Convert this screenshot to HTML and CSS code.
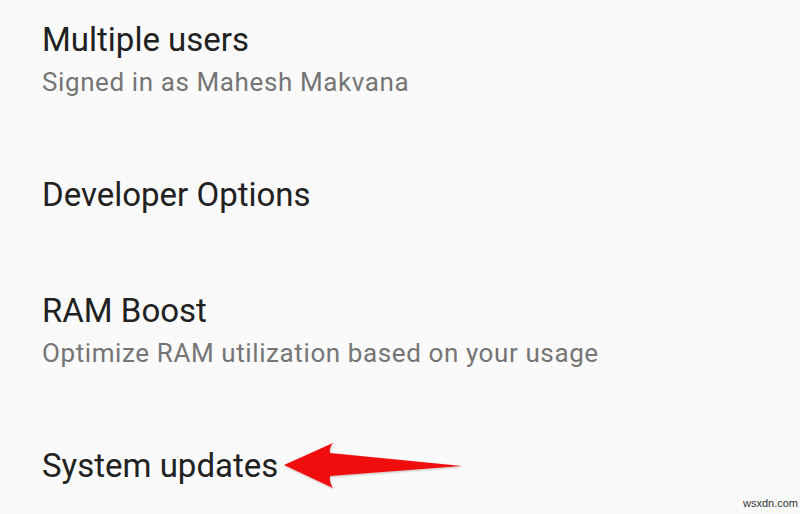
FILE: index.html
```html
<!DOCTYPE html>
<html>
<head>
<meta charset="utf-8">
<link rel="stylesheet" href="styles.css">
</head>
<body>
<div class="list">
  <div class="item">
    <div class="title">Multiple users</div>
    <div class="summary">Signed in as Mahesh Makvana</div>
  </div>
  <div class="item single">
    <div class="title">Developer Options</div>
  </div>
  <div class="item">
    <div class="title">RAM Boost</div>
    <div class="summary">Optimize RAM utilization based on your usage</div>
  </div>
  <div class="item">
    <div class="title">System updates</div>
  </div>
</div>
<svg class="arrow" width="190" height="56" viewBox="0 0 190 56">
  <defs>
    <filter id="sh" x="-10%" y="-30%" width="120%" height="160%">
      <feDropShadow dx="0.5" dy="1" stdDeviation="1" flood-color="#000" flood-opacity="0.25"/>
    </filter>
  </defs>
  <path d="M4 27 L53 5 Q49 10 50 15 L182 28 L50 38 Q49 44 53 50 Z" fill="#f01010" filter="url(#sh)"/>
</svg>
<div class="watermark">wsxdn.com</div>
</body>
</html>
```

FILE: styles.css
```css
html, body {
  margin: 0;
  padding: 0;
  background: #fafafa;
  height: 514px;
  overflow: hidden;
}
body {
  position: relative;
  font-family: Roboto, "Noto Sans", sans-serif;
}
.list {
  display: flex;
  flex-direction: column;
  padding-left: 42px;
}
.item {
  padding: 33px 0 38px;
}
.item:first-child {
  padding-top: 20px;
}
.item.single {
  padding-bottom: 43px;
}
.title {
  font-size: 33px;
  line-height: 40px;
  color: #212121;
}
.summary {
  font-size: 26px;
  line-height: 44px;
  letter-spacing: 0.6px;
  color: #757575;
}
.arrow {
  position: absolute;
  left: 280px;
  top: 438px;
}
.watermark {
  position: absolute;
  left: 743px;
  top: 497px;
  font-family: "Liberation Sans", Arial, sans-serif;
  font-size: 11px;
  color: #333;
}
```
